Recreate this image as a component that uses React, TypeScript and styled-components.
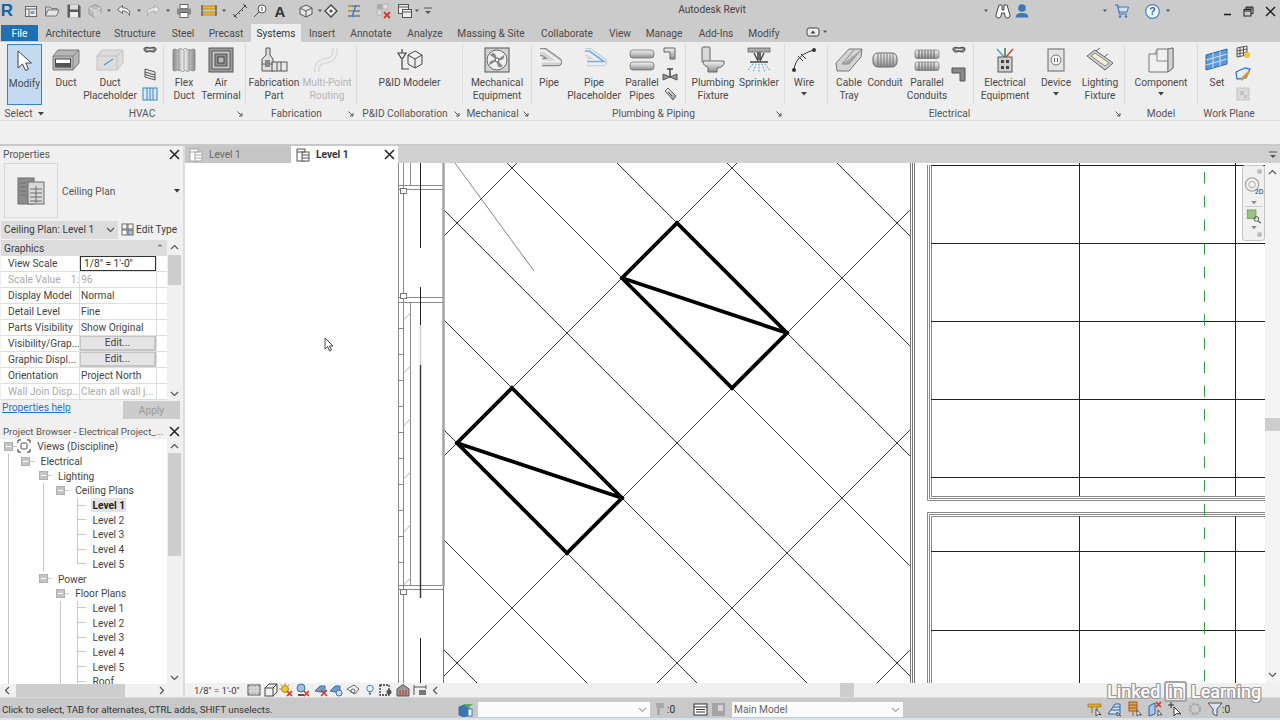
import React from "react";
import styled, { createGlobalStyle, css } from "styled-components";

const GlobalStyle = createGlobalStyle`
  html, body { margin: 0; padding: 0; background: #f0f0f0; }
  * { box-sizing: border-box; }
`;

type Item = [number, React.ReactNode];

// slots are 14px wide, the margin comes from the icon's centre in the strip
function IconStrip({ start, items }: { start: number; items: Item[] }) {
  let end = start;
  return (
    <>
      {items.map(([center, icon], i) => {
        const ml = center - 7 - end;
        end = center + 7;
        return (
          <Slot key={i} $ml={ml}>
            {icon}
          </Slot>
        );
      })}
    </>
  );
}

const Ico = ({ s = 14, h, children }: { s?: number; h?: number; children: React.ReactNode }) => (
  <svg width={s} height={h ?? s} viewBox={`0 0 ${s} ${h ?? s}`} fill="none">
    {children}
  </svg>
);

const Caret = ({ c = "#444" }: { c?: string }) => (
  <svg width="6" height="4" viewBox="0 0 6 4">
    <path d="M0 0H6L3 3.5Z" fill={c} />
  </svg>
);

const Dot = () => (
  <svg width="4" height="6" viewBox="0 0 4 6">
    <path d="M0 1.5H4L2 4Z" fill="#555" />
  </svg>
);

const Chevron = ({ dir, c = "#555" }: { dir: "up" | "down" | "left" | "right"; c?: string }) => {
  const d = {
    up: "M1 6L4.5 2.5L8 6",
    down: "M1 3L4.5 6.5L8 3",
    left: "M6 1L2.5 4.5L6 8",
    right: "M3 1L6.5 4.5L3 8",
  }[dir];
  return (
    <svg width="9" height="9" viewBox="0 0 9 9" fill="none">
      <path d={d} stroke={c} strokeWidth="1.2" />
    </svg>
  );
};

const Defs = () => (
  <svg width="0" height="0" style={{ position: "absolute" }}>
    <defs>
      <linearGradient id="metal" x1="0" y1="0" x2="0" y2="1">
        <stop offset="0" stopColor="#f2f2f2" />
        <stop offset="0.5" stopColor="#c4c4c4" />
        <stop offset="1" stopColor="#8d8d8d" />
      </linearGradient>
      <linearGradient id="metalH" x1="0" y1="0" x2="1" y2="0">
        <stop offset="0" stopColor="#8d8d8d" />
        <stop offset="0.5" stopColor="#efefef" />
        <stop offset="1" stopColor="#8d8d8d" />
      </linearGradient>
    </defs>
  </svg>
);

/* quick access toolbar */
const QDoc = () => (
  <Ico>
    <rect x="1.5" y="2.5" width="11" height="10" fill="#eee" stroke="#666" />
    <path d="M1.5 5H12.5M5 5V12.5" stroke="#666" />
    <rect x="6.5" y="7" width="4" height="3" fill="#7fa3c7" />
  </Ico>
);
const QOpen = () => (
  <Ico s={16}>
    <path d="M1.5 4H6L7.5 5.5H13V7M1.5 4V13H12.5L15 7H4L1.5 13" stroke="#777" fill="#e6e6e6" />
  </Ico>
);
const QSave = () => (
  <Ico s={16}>
    <path d="M1.5 1.5H12.5L14.5 3.5V14.5H1.5Z" fill="#5d5d5d" />
    <rect x="4" y="1.5" width="8" height="5" fill="#ddd" />
    <rect x="4" y="9" width="8" height="5.5" fill="#eee" />
  </Ico>
);
const QCube = () => (
  <Ico s={16}>
    <path d="M8 1.5L14 4.5V11L8 14.5L2 11V4.5Z" fill="#bdbdbd" stroke="#999" />
    <path d="M2 4.5L8 8L14 4.5M8 8V14.5" stroke="#e8e8e8" />
    <circle cx="11" cy="11" r="3" fill="#d0d0d0" />
  </Ico>
);
const QUndo = ({ c = "#666" }: { c?: string }) => (
  <Ico s={16}>
    <path d="M6.5 2.5L1.5 6.5L6.5 10.5V8C10 8 12 9 13.5 12.5C14.5 7 11 4.8 6.5 4.8Z" fill="#f4f4f4" stroke={c} />
  </Ico>
);
const QRedo = () => (
  <Ico s={16}>
    <path d="M9.5 2.5L14.5 6.5L9.5 10.5V8C6 8 4 9 2.5 12.5C1.5 7 5 4.8 9.5 4.8Z" fill="#ececec" stroke="#aaa" />
  </Ico>
);
const QPrint = () => (
  <Ico s={16}>
    <rect x="4" y="1.5" width="8" height="4" fill="#fff" stroke="#666" />
    <rect x="1" y="5.5" width="14" height="6" rx="1" fill="#8a8a8a" />
    <rect x="4" y="9.5" width="8" height="5" fill="#fff" stroke="#666" />
  </Ico>
);
const QMeasure = () => (
  <Ico s={16}>
    <rect x="1" y="3" width="14" height="3" fill="#e8b93c" stroke="#8c6d14" strokeWidth=".6" />
    <rect x="1" y="9" width="14" height="3" fill="#e8b93c" stroke="#8c6d14" strokeWidth=".6" />
    <path d="M1 2V13M15 2V13" stroke="#444" />
  </Ico>
);
const QDiag = () => (
  <Ico s={16}>
    <path d="M2 14L14 2M1 11L5 15M11 1L15 5" stroke="#444" />
    <path d="M6 9L8 11M9 6L11 8" stroke="#444" />
  </Ico>
);
const QTag = () => (
  <Ico s={16}>
    <circle cx="10" cy="6" r="4" stroke="#555" fill="#fff" />
    <path d="M7 9L2 14" stroke="#555" />
    <path d="M10 4V8" stroke="#555" />
  </Ico>
);
const QA = () => <BigA>A</BigA>;
const QView3d = () => (
  <Ico s={16}>
    <path d="M8 2L14 5V11L8 14L2 11V5Z" stroke="#555" fill="#e4e4e4" />
    <path d="M2 5L8 8L14 5M8 8V14" stroke="#555" />
  </Ico>
);
const QDiamond = () => (
  <Ico s={16}>
    <path d="M8 2L14 8L8 14L2 8Z" stroke="#444" fill="#eee" strokeWidth="1.3" />
    <circle cx="8" cy="8" r="1.6" fill="#555" />
  </Ico>
);
const QThin = () => (
  <Ico s={16}>
    <path d="M2 3H14M2 8H14M2 13H14" stroke="#777" strokeWidth="1.5" />
    <path d="M10 2L6 14" stroke="#3d7fc4" strokeWidth="1.5" />
    <path d="M2 3H6M2 8H6" stroke="#c9a227" strokeWidth="1.5" />
  </Ico>
);
const QClose = () => (
  <Ico s={16}>
    <rect x="1" y="1" width="5" height="5" fill="#aaa" />
    <rect x="7" y="1" width="5" height="5" fill="#ddd" stroke="#999" strokeWidth=".5" />
    <rect x="1" y="7" width="5" height="5" fill="#ddd" stroke="#999" strokeWidth=".5" />
    <path d="M8 9L14 15M14 9L8 15" stroke="#d8372a" strokeWidth="1.8" />
  </Ico>
);
const QWindows = () => (
  <Ico s={16}>
    <rect x="1.5" y="1.5" width="10" height="9" fill="#eee" stroke="#555" />
    <rect x="5.5" y="6.5" width="9" height="8" fill="#eee" stroke="#555" />
    <path d="M1.5 4H11.5M5.5 9H14.5" stroke="#555" />
  </Ico>
);
const QCustom = () => (
  <Ico s={10}>
    <path d="M1 2H9" stroke="#555" />
    <path d="M2 5H8L5 8Z" fill="#555" />
  </Ico>
);

const Binoculars = () => (
  <Ico s={16}>
    <path d="M4 2H7V7H9V2H12L15 12A2.5 2.5 0 0 1 10 13L9.5 10H6.5L6 13A2.5 2.5 0 0 1 1 12Z" fill="#fff" stroke="#444" />
  </Ico>
);
const User = () => (
  <Ico s={16}>
    <circle cx="8" cy="5" r="3.8" fill="#3d76b5" />
    <path d="M1.5 14.5C2 10.5 5 10 8 10C11 10 14 10.5 14.5 14.5Z" fill="#3d76b5" />
  </Ico>
);
const Cart = () => (
  <Ico s={16}>
    <path d="M1 2H3.5L5.5 11H13" stroke="#3d76b5" strokeWidth="1.2" />
    <path d="M4 4H14.5L13 9H5.2Z" fill="#cfe0f0" stroke="#3d76b5" />
    <circle cx="6" cy="13.5" r="1.2" fill="#3d76b5" />
    <circle cx="12" cy="13.5" r="1.2" fill="#3d76b5" />
  </Ico>
);
const Help = () => (
  <svg width="15" height="15" viewBox="0 0 15 15">
    <circle cx="7.5" cy="7.5" r="6.8" fill="#f4f8fc" stroke="#4b80b8" strokeWidth="1.2" />
    <text x="7.5" y="11.2" textAnchor="middle" fontFamily="Liberation Sans" fontWeight="700" fontSize="10.5" fill="#2f6aa8">
      ?
    </text>
  </svg>
);
const WinMin = () => (
  <Ico s={10}>
    <path d="M1 8.5H8" stroke="#222" strokeWidth="1.6" />
  </Ico>
);
const WinRestore = () => (
  <Ico s={11}>
    <rect x="1" y="3.5" width="7" height="6.5" fill="none" stroke="#222" />
    <path d="M3 3.5V1H10V7.5H8M1 5H8" stroke="#222" />
    <path d="M3 2H10" stroke="#222" />
  </Ico>
);
const WinClose = () => (
  <Ico s={11}>
    <path d="M1 1L10 10M10 1L1 10" stroke="#222" strokeWidth="1.5" />
  </Ico>
);

/* ribbon, large */
const ModifyIco = () => (
  <Ico s={24}>
    <path d="M5 2V19L9.5 15L12.5 21.5L15.5 20.2L12.7 14H18.5Z" fill="#fff" stroke="#444" />
  </Ico>
);
const DuctIco = ({ ghost }: { ghost?: boolean }) => (
  <svg width="28" height="22" viewBox="0 0 28 22">
    <path d="M1 7L6 1H27V14L21 21H1Z" fill={ghost ? "#dcdcdc" : "#b5b5b5"} stroke={ghost ? "#bbb" : "#666"} strokeWidth=".8" />
    <path d="M1 7H21V21M21 7L27 1" stroke={ghost ? "#bbb" : "#777"} strokeWidth=".8" fill="none" />
    {ghost ? (
      <path d="M8 16L17 10" stroke="#5a9ad6" strokeWidth="1.3" />
    ) : (
      <rect x="3.5" y="10" width="15" height="8" fill="#fff" stroke="#444" />
    )}
    {!ghost && <rect x="3.5" y="14" width="15" height="4" fill="#555" />}
  </svg>
);
const FlexDuct = () => (
  <svg width="24" height="26" viewBox="0 0 24 26">
    <path
      d="M1 3C3 0 5 5 7 2C9 0 10 4 12 2C14 0 15 4 17 2C19 5 21 0 23 3V23C21 26 19 21 17 24C15 26 14 22 12 24C10 26 9 22 7 24C5 21 3 26 1 23Z"
      fill="url(#metalH)"
      stroke="#777"
      strokeWidth=".7"
    />
    <path d="M7 3V23M12 3V23M17 3V23" stroke="#8a8a8a" strokeWidth=".8" />
  </svg>
);
const AirTerminal = () => (
  <svg width="26" height="26" viewBox="0 0 26 26">
    <rect x="1" y="1" width="24" height="24" fill="#9d9d9d" stroke="#555" />
    <rect x="4" y="4" width="18" height="18" fill="#c8c8c8" stroke="#555" />
    <rect x="7" y="7" width="12" height="12" fill="#8c8c8c" stroke="#555" />
    <rect x="10" y="10" width="6" height="6" fill="#bbb" stroke="#444" />
  </svg>
);
const FabPart = () => (
  <svg width="28" height="26" viewBox="0 0 28 26">
    <path d="M6 1H10V8L13 12V24H2V12L6 8Z" fill="#dedede" stroke="#555" />
    <rect x="12" y="15" width="15" height="9" fill="#e8e8e8" stroke="#555" />
    <path d="M17 15V24M21 15V24M2 17H13" stroke="#555" />
    <rect x="5" y="13" width="5" height="7" fill="#888" />
  </svg>
);
const MultiRoute = () => (
  <svg width="26" height="28" viewBox="0 0 26 28" fill="none">
    <path d="M3 26C2 17 7 16 11 15C17 14 21 13 21 2" stroke="#dcdcdc" strokeWidth="6" />
    <path d="M3 26C2 17 7 16 11 15C17 14 21 13 21 2" stroke="#efefef" strokeWidth="2.5" />
  </svg>
);
const PidIco = () => (
  <svg width="26" height="24" viewBox="0 0 26 24" fill="none">
    <path d="M5 1V5M1 5H9L6 10H4ZM5 10V21H12" stroke="#444" strokeWidth="1.2" />
    <path d="M18 3L25 7V16L18 20L11 16V7Z" fill="#eee" stroke="#444" />
    <path d="M11 7L18 11L25 7M18 11V20" stroke="#444" />
  </svg>
);
const MechEquip = () => (
  <svg width="26" height="26" viewBox="0 0 26 26" fill="none">
    <rect x="1" y="1" width="24" height="24" fill="#d2d2d2" stroke="#555" />
    <circle cx="13" cy="13" r="10" fill="#efefef" stroke="#666" />
    <path d="M13 13L6 8C9 4 12 6 13 13ZM13 13L20 8C21 12 18 14 13 13ZM13 13L19 19C15 22 13 20 13 13ZM13 13L6 18C4 15 7 13 13 13Z" fill="#888" />
    <circle cx="13" cy="13" r="2" fill="#fff" stroke="#555" />
  </svg>
);
const PipeIco = ({ ghost }: { ghost?: boolean }) => (
  <svg width="26" height="24" viewBox="0 0 26 24" fill="none">
    <path d="M4 4H8L22 14H6" stroke={ghost ? "#c8c8c8" : "#777"} strokeWidth="8.5" strokeLinejoin="round" />
    <path d="M4 4H8L22 14H6" stroke={ghost ? "#e8eef5" : "#d4d4d4"} strokeWidth="6.5" strokeLinejoin="round" />
    <path d="M4 3H8.4L23 13.5H6" stroke={ghost ? "#6db0e8" : "#f5f5f5"} strokeWidth="1.6" />
  </svg>
);
const ParallelPipes = () => (
  <svg width="26" height="24" viewBox="0 0 26 24">
    <rect x="1" y="2" width="24" height="8" rx="3" fill="url(#metal)" stroke="#666" strokeWidth=".7" />
    <rect x="1" y="14" width="24" height="8" rx="3" fill="url(#metal)" stroke="#666" strokeWidth=".7" />
  </svg>
);
const Toilet = () => (
  <svg width="26" height="28" viewBox="0 0 26 28">
    <rect x="2" y="1" width="8" height="15" rx="1" fill="#d8d8d8" stroke="#666" />
    <path d="M3 15H24C25 21 19 22 17 22V26H8V21C5 20 3 19 3 15Z" fill="url(#metal)" stroke="#666" />
  </svg>
);
const SprinklerIco = () => (
  <svg width="28" height="27" viewBox="0 0 28 27" fill="none">
    <rect x="3" y="1" width="22" height="4" fill="#aaa" stroke="#555" strokeWidth=".7" />
    <path d="M12 5H16V13H12Z" fill="#666" />
    <path d="M9 6L13 14M19 6L15 14M5 15H23" stroke="#444" strokeWidth="1.4" />
    <path d="M8 17L3 23M11 17L8 25M14 17V26M17 17L20 25M20 17L25 23" stroke="#6ba6d8" strokeWidth="1.2" strokeDasharray="1.5 1.5" />
  </svg>
);
const WireIco = () => (
  <svg width="26" height="26" viewBox="0 0 26 26" fill="none">
    <path d="M3 23C4 12 12 6 23 3" stroke="#333" />
    <circle cx="3" cy="23" r="2" fill="#333" />
    <circle cx="23" cy="3" r="2" fill="#333" />
    <path d="M7 9L12 14M10 7L15 12" stroke="#333" />
  </svg>
);
const CableTrayIco = () => (
  <svg width="28" height="26" viewBox="0 0 28 26">
    <path d="M1 16L14 2H27L26 10L14 24H2Z" fill="#d4d4d4" stroke="#777" />
    <path d="M7 17L19 3M7 17H14L26 3" stroke="#888" fill="#a8a8a8" />
  </svg>
);
const ConduitIco = () => (
  <svg width="26" height="16" viewBox="0 0 26 16">
    <rect x="1" y="1" width="24" height="14" rx="5" fill="url(#metal)" stroke="#666" />
    {[6, 9, 12, 15, 18, 21].map((x) => (
      <path key={x} d="M0 1.5V14.5" transform={`translate(${x} 0)`} stroke="#777" />
    ))}
  </svg>
);
const ParallelConduits = () => (
  <svg width="26" height="24" viewBox="0 0 26 24">
    {[2, 14].map((y) => (
      <g key={y}>
        <rect x="1" y={y} width="24" height="8.5" rx="2" fill="url(#metal)" stroke="#777" strokeWidth=".7" />
        {[5, 8, 11, 14, 17, 20].map((x) => (
          <path key={x} d={`M${x} ${y}v8.5`} stroke="#666" />
        ))}
      </g>
    ))}
  </svg>
);
const ElecEquip = () => (
  <svg width="26" height="26" viewBox="0 0 26 26" fill="none">
    <path d="M12 10L5 2" stroke="#4aa3d8" strokeWidth="1.5" />
    <path d="M13 10V1" stroke="#3b7a3b" strokeWidth="1.5" />
    <path d="M14 10L21 2" stroke="#d8443a" strokeWidth="1.5" />
    <rect x="6" y="10" width="14" height="15" fill="#cfcfcf" stroke="#555" />
    <path d="M9 13H12V16H9ZM14 13H17V16H14ZM9 19H12V22H9ZM14 19H17V22H14Z" fill="#444" />
  </svg>
);
const DeviceIco = () => (
  <svg width="18" height="24" viewBox="0 0 18 24" fill="none">
    <rect x="1" y="1" width="16" height="22" fill="#e4e4e4" stroke="#666" />
    <circle cx="9" cy="12" r="5" fill="#f2f2f2" stroke="#777" />
    <path d="M7.5 10V14M10.5 10V14" stroke="#666" />
  </svg>
);
const LightFixture = () => (
  <svg width="28" height="26" viewBox="0 0 28 26" fill="none">
    <path d="M1 9L9 3L27 16L19 23Z" fill="#cfcfcf" stroke="#666" />
    <path d="M5 9L9 6L23 16L19 19Z" fill="#f4f0d8" stroke="#888" />
    <path d="M10 4L14 1M18 10L22 7" stroke="#666" />
  </svg>
);
const ComponentIco = () => (
  <svg width="26" height="26" viewBox="0 0 26 26">
    <path d="M1 7H9V2H20L25 1V21L20 25H1Z" fill="#f0f0f0" stroke="#777" />
    <path d="M9 2L7 7M9 7V14H20V25M20 2V14M20 14L25 10" stroke="#888" fill="none" />
    <path d="M20 2L25 1V21L20 25Z" fill="#d2d2d2" stroke="#777" />
  </svg>
);
const SetIco = () => (
  <svg width="24" height="24" viewBox="0 0 24 24">
    <path d="M1 7L22 1V16L1 22Z" fill="#5c9ad6" stroke="#2d679f" />
    <path d="M8 5V20M15 3V18M1 12L22 6M1 17L22 11" stroke="#cfe2f5" />
  </svg>
);

/* ribbon, small */
const Elbow = () => (
  <Ico s={16}>
    <path d="M2 4C2 2 5 2 8 3C11 2 14 2 14 4C14 7 11 8 8 6C5 8 2 7 2 4Z" fill="#888" stroke="#444" />
    <path d="M5 4.5H11" stroke="#eee" />
  </Ico>
);
const Grille = () => (
  <Ico s={16}>
    <path d="M3 3L13 6V14L3 11Z" fill="#e8e8e8" stroke="#555" />
    <path d="M3 6L13 9M3 8.5L13 11.5" stroke="#555" />
  </Ico>
);
const Flex2 = () => (
  <Ico s={16}>
    <rect x="1" y="2" width="14" height="12" fill="#d8e8f5" stroke="#3b86c5" />
    <path d="M5 2V14M8 2V14M11 2V14" stroke="#3b86c5" />
  </Ico>
);
const PipeFit = () => (
  <Ico s={16}>
    <path d="M2 3H13V14H8V7H2Z" fill="url(#metal)" stroke="#666" />
  </Ico>
);
const Valve = () => (
  <Ico s={16}>
    <path d="M1 8V14L8 11L15 14V8L8 11Z" fill="#999" stroke="#555" />
    <path d="M8 11V3M5 3H11" stroke="#444" strokeWidth="1.5" />
  </Ico>
);
const Union = () => (
  <Ico s={16}>
    <path d="M3 5L6 2L14 10L11 14Z" fill="url(#metal)" stroke="#666" />
    <path d="M6 6L10 10" stroke="#444" />
  </Ico>
);
const ConduitElbow = () => (
  <Ico s={16}>
    <path d="M1 2H14V15H9V7H1Z" fill="#888" stroke="#555" />
  </Ico>
);
const WpGrid = () => (
  <Ico s={16}>
    <path d="M2 3L12 1V10L2 12Z" fill="#eee" stroke="#555" />
    <path d="M5 2.5V11.5M8.5 1.8V10.8M2 6L12 4M2 9L12 7" stroke="#555" />
    <circle cx="12" cy="10" r="3" fill="#f0c33c" />
  </Ico>
);
const WpEdit = () => (
  <Ico s={16}>
    <path d="M1 6L10 2L15 3L11 12L2 13Z" stroke="#2d7fc9" strokeWidth="1.3" />
    <path d="M6 14L14 6" stroke="#d99a2b" strokeWidth="2.5" />
  </Ico>
);
const WpGhost = () => (
  <Ico s={16}>
    <rect x="2" y="2" width="12" height="12" fill="#dadada" stroke="#c2c2c2" />
    <path d="M5 5H9V9H5ZM9 9H12V12H9Z" fill="#c2c2c2" />
  </Ico>
);
const CeilingSmall = ({ dim }: { dim?: boolean }) => (
  <Ico s={14}>
    <rect x="1" y="1" width="8" height="12" fill="#fff" stroke={dim ? "#aaa" : "#555"} />
    <rect x="6" y="4" width="7" height="9" fill="#fff" stroke={dim ? "#aaa" : "#555"} />
    <path d="M1 4H9M6 7H13M6 10H13" stroke={dim ? "#aaa" : "#555"} />
  </Ico>
);
const CeilingBig = () => (
  <svg width="28" height="28" viewBox="0 0 28 28">
    <rect x="1" y="1" width="16" height="26" fill="#8d8d8d" stroke="#6c6c6c" />
    <rect x="11" y="5" width="16" height="22" fill="#d8d8d8" stroke="#6c6c6c" />
    <path d="M3 6H9M3 10H9M3 14H9M3 18H9M13 12H25M13 16H25M13 20H25M13 24H25M19 9V26" stroke="#6c6c6c" />
  </svg>
);
const EditTypeIco = () => (
  <Ico s={13}>
    <rect x="1" y="1" width="5" height="5" fill="#fff" stroke="#666" />
    <rect x="7" y="1" width="5" height="5" fill="#fff" stroke="#666" />
    <rect x="1" y="7" width="5" height="5" fill="#fff" stroke="#666" />
    <rect x="7" y="7" width="5" height="5" fill="#9cc0e0" stroke="#666" />
  </Ico>
);
const ViewsIco = () => (
  <Ico s={14}>
    <path d="M1 4V1H4M10 1H13V4M13 10V13H10M4 13H1V10" stroke="#333" />
    <rect x="4" y="4" width="6" height="6" rx="1.5" stroke="#444" />
  </Ico>
);
const Launcher = () => (
  <svg width="6" height="6" viewBox="0 0 6 6" fill="none">
    <path d="M0.5 0.5L5 5M5 2V5H2" stroke="#555" />
  </svg>
);
const XIco = () => (
  <Ico s={11}>
    <path d="M1 1L10 10M10 1L1 10" stroke="#222" strokeWidth="1.5" />
  </Ico>
);

/* view control bar */
const VScaleBox = () => (
  <Ico>
    <rect x="1" y="2" width="12" height="10" fill="#bbb" stroke="#555" />
    <path d="M1 5H13M1 8H13M4 2V12M7 2V12M10 2V12" stroke="#eee" strokeWidth=".7" />
  </Ico>
);
const VCube = () => (
  <Ico>
    <rect x="1" y="5" width="8" height="8" stroke="#444" />
    <path d="M1 5L5 1H13V9L9 13M9 5L13 1" stroke="#444" />
  </Ico>
);
const VSun = () => (
  <Ico>
    <circle cx="6" cy="6" r="3.5" fill="#f0c33c" stroke="#b78b12" />
    <path d="M6 0V2M0 6H2M1.5 1.5L3 3M10.5 1.5L9 3" stroke="#b78b12" />
    <path d="M8 8L13 13M13 8L8 13" stroke="#d8372a" strokeWidth="1.7" />
  </Ico>
);
const VShadow = () => (
  <Ico>
    <circle cx="5" cy="5" r="4" fill="#9cc0e0" stroke="#3b6fa5" />
    <path d="M2 12H8" stroke="#555" strokeWidth="2" />
    <path d="M8 8L13 13M13 8L8 13" stroke="#d8372a" strokeWidth="1.7" />
  </Ico>
);
const VCrop = ({ x }: { x?: boolean }) => (
  <Ico>
    <path d="M1 8L6 3H11V9H6Z" fill="#6f9cc9" stroke="#3b6fa5" />
    {x ? <path d="M7 7L13 13M13 7L7 13" stroke="#d8372a" strokeWidth="1.7" /> : <circle cx="10" cy="10" r="3" fill="#cfe0f0" stroke="#3b6fa5" />}
  </Ico>
);
const VGlasses = () => (
  <Ico>
    <path d="M1 6L8 2L13 6L9 11Z" stroke="#666" fill="#f4f4f4" />
    <circle cx="7" cy="8" r="2" stroke="#666" />
  </Ico>
);
const VBulb = () => (
  <Ico>
    <circle cx="7" cy="5.5" r="3.2" stroke="#3b7fb8" fill="#e8f2fa" />
    <path d="M5.5 9.5H8.5L7.5 12H6.5Z" fill="#3b7fb8" />
  </Ico>
);
const VReveal = () => (
  <Ico>
    <rect x="1" y="2" width="9" height="10" stroke="#333" strokeDasharray="2 1" strokeWidth="1.3" />
    <circle cx="10" cy="9" r="2.5" fill="#555" />
  </Ico>
);
const VHouse = () => (
  <Ico>
    <path d="M1 6L7 1.5L13 6V13H1Z" fill="#9a9a9a" stroke="#555" />
    <path d="M4 7V13M7 7V13M10 7V13" stroke="#c0392b" />
  </Ico>
);
const VLevel = () => (
  <Ico>
    <path d="M1 2V12M1 4H13M13 2V6" stroke="#555" />
    <rect x="6" y="7" width="7" height="5" fill="#777" />
  </Ico>
);

/* status bar */
const SWorkset = () => (
  <Ico s={16}>
    <path d="M1 6L6 4L11 6V14L6 16L1 14Z" fill="#3d76b5" stroke="#1f4f85" strokeWidth=".6" />
    <path d="M5 3H15L10 7Z" fill="#5cae5c" />
    <rect x="10" y="8" width="4" height="7" fill="#fff" stroke="#3d76b5" />
  </Ico>
);
const SGhost = () => (
  <Ico s={16}>
    <path d="M4 2H12V7H8V14H5V6H4Z" fill="#a9a9a9" />
  </Ico>
);
const SPanel = () => (
  <Ico s={15}>
    <rect x="1" y="2" width="13" height="11" fill="#fff" stroke="#333" />
    <path d="M1 5H14M3 7.5H12M3 10H12" stroke="#333" />
  </Ico>
);
const SGhost2 = () => (
  <Ico s={15}>
    <rect x="1" y="1" width="13" height="13" fill="#a4a4a4" />
    <path d="M7 3H12V9H7Z" fill="#d4d4d4" />
  </Ico>
);
const SYellow = () => (
  <Ico s={16}>
    <path d="M1 3H14V6H1Z" fill="#e6a72c" stroke="#8c6d14" strokeWidth=".6" />
    <path d="M5 6V12M10 6V10" stroke="#8c6d14" />
    <path d="M9 8V15L11 13L14 14Z" fill="#fff" stroke="#333" strokeWidth=".8" />
  </Ico>
);
const SBlueFrame = () => (
  <Ico s={16}>
    <path d="M1 13L8 3H13V13Z" fill="#cfe0f0" stroke="#2d679f" />
    <path d="M4 9H13M6 6H13" stroke="#2d679f" />
    <path d="M10 11V15L12 14L14 15Z" fill="#fff" stroke="#333" strokeWidth=".8" />
  </Ico>
);
const SOrange = () => (
  <Ico s={16}>
    <rect x="2" y="1" width="8" height="9" fill="#e8a05c" stroke="#a35a1c" />
    <path d="M2 4H10M2 7H10M6 10V15" stroke="#a35a1c" />
    <path d="M10 9V15L12 13.5L14.5 14Z" fill="#fff" stroke="#333" strokeWidth=".8" />
  </Ico>
);
const SBlueX = () => (
  <Ico s={16}>
    <path d="M2 5L8 2V13L2 15Z" fill="#a9c8e6" stroke="#2d679f" />
    <path d="M9 1L14 6M14 1L9 6" stroke="#d8372a" strokeWidth="1.7" />
    <path d="M11 9V15L12.5 13.5L15 14Z" fill="#fff" stroke="#333" strokeWidth=".8" />
  </Ico>
);
const SMove = () => (
  <Ico s={16}>
    <path d="M4 1V7M1 4H7" stroke="#333" />
    <path d="M7 6V15L9.5 12.5L14 13Z" fill="#fff" stroke="#333" />
  </Ico>
);
const SGear = () => (
  <Ico s={16}>
    <circle cx="8" cy="8" r="5" stroke="#a9a9a9" strokeWidth="2.4" strokeDasharray="3 1" />
  </Ico>
);
const SFilter = () => (
  <Ico s={16}>
    <path d="M1 2H15L10 8V15L6 13V8Z" fill="#d8e4ee" stroke="#555" />
  </Ico>
);

const TABS: [string, number][] = [
  ["Architecture", 70],
  ["Structure", 54],
  ["Steel", 42],
  ["Precast", 44],
];
const TABS_AFTER: [string, number][] = [
  ["Insert", 42],
  ["Annotate", 56],
  ["Analyze", 52],
  ["Massing & Site", 80],
  ["Collaborate", 72],
  ["View", 34],
  ["Manage", 54],
  ["Add-Ins", 50],
  ["Modify", 46],
];

function Tool({
  w,
  icon,
  label,
  dim,
  active,
  caret,
}: {
  w: number;
  icon: React.ReactNode;
  label: string;
  dim?: boolean;
  active?: boolean;
  caret?: boolean;
}) {
  return (
    <ToolBox $w={w} $active={active}>
      <IconSlot>{icon}</IconSlot>
      <ToolLabel $dim={dim}>{label}</ToolLabel>
      {caret && (
        <CaretRow>
          <Caret />
        </CaretRow>
      )}
    </ToolBox>
  );
}

const PROPS: { name: string; value: string; dim?: boolean; edit?: boolean; input?: boolean }[] = [
  { name: "View Scale", value: "1/8\" = 1'-0\"", input: true },
  { name: "Scale Value    1:", value: "96", dim: true },
  { name: "Display Model", value: "Normal" },
  { name: "Detail Level", value: "Fine" },
  { name: "Parts Visibility", value: "Show Original" },
  { name: "Visibility/Grap...", value: "Edit...", edit: true },
  { name: "Graphic Displ...", value: "Edit...", edit: true },
  { name: "Orientation", value: "Project North" },
  { name: "Wall Join Disp...", value: "Clean all wall j...", dim: true },
];

// each char of cells is one tree column: | line, + expander, T tee, L elbow
const TREE: { cells: string; label: string; views?: boolean; sel?: boolean }[] = [
  { cells: "+", label: "Views (Discipline)", views: true },
  { cells: "|+", label: "Electrical" },
  { cells: "| +", label: "Lighting" },
  { cells: "| |+", label: "Ceiling Plans" },
  { cells: "| | T", label: "Level 1", sel: true },
  { cells: "| | T", label: "Level 2" },
  { cells: "| | T", label: "Level 3" },
  { cells: "| | T", label: "Level 4" },
  { cells: "| | L", label: "Level 5" },
  { cells: "| +", label: "Power" },
  { cells: "|  +", label: "Floor Plans" },
  { cells: "|  |T", label: "Level 1" },
  { cells: "|  |T", label: "Level 2" },
  { cells: "|  |T", label: "Level 3" },
  { cells: "|  |T", label: "Level 4" },
  { cells: "|  |T", label: "Level 5" },
  { cells: "|  |T", label: "Roof" },
];

function Scrollbar({ top, size, w = 13 }: { top: number; size: number; w?: number }) {
  return (
    <ScrollTrack $w={w}>
      <ScrollArrow>
        <Chevron dir="up" />
      </ScrollArrow>
      <ScrollThumb $top={top} $size={size} />
      <ScrollFill />
      <ScrollArrow>
        <Chevron dir="down" />
      </ScrollArrow>
    </ScrollTrack>
  );
}

function Drawing() {
  const sums = [680, 900, 1120, 1340, 1560, 1780];
  const diffs = [];
  for (let d = -646; d <= 800; d += 110) diffs.push(d);
  const hLines = [243, 321, 399, 477, 551, 630];
  const hatch = [320, 373, 426, 479, 532, 585];
  const ticks = [];
  for (let y = 302; y < 586; y += 26) ticks.push(y);
  return (
    <svg width="1080" height="520" viewBox="185 163 1080 520" fill="none">
      <defs>
        <clipPath id="gridclip">
          <rect x="444" y="163" width="467" height="520" />
        </clipPath>
      </defs>
      <g clipPath="url(#gridclip)" stroke="#3a3a3a" strokeWidth="1">
        {sums.map((s) => (
          <line key={s} x1={s - 163} y1="163" x2={s - 683} y2="683" />
        ))}
        {diffs.map((d) => (
          <line key={d} x1={d + 163} y1="163" x2={d + 683} y2="683" />
        ))}
      </g>
      <path d="M455 163L534 271" stroke="#666" strokeWidth=".8" />
      <g stroke="#000" strokeWidth="3.8" strokeLinejoin="miter">
        <path d="M677 223L787 333L732 388L622 278ZM622 278L787 333" />
        <path d="M512 388L622 498L567 553L457 443ZM457 443L622 498" />
      </g>

      {/* wall on the left */}
      <g stroke="#8a8a8a" strokeWidth="1">
        <path d="M398.5 163V683M403.5 163V683M410.5 163V185M410.5 302V585M398.5 185.5H443M398.5 189.5H443M398.5 297.5H443M398.5 302.5H443M398.5 585.5H443M398.5 589.5H443" />
        {hatch.map((y) => (
          <line key={y} x1="403.5" y1={y} x2="410.5" y2={y - 7} stroke="#aaa" />
        ))}
        {ticks.map((y) => (
          <line key={y} x1="398.5" y1={y + 0.5} x2="403.5" y2={y + 0.5} />
        ))}
        <path d="M443.5 163V586" stroke="#a0a0a0" strokeWidth="2.4" />
        <path d="M443.5 586V683" stroke="#777" />
      </g>
      <rect x="400.5" y="188.5" width="6" height="5" fill="#fff" stroke="#777" />
      <rect x="400.5" y="293.5" width="6" height="5" fill="#fff" stroke="#777" />
      <rect x="400.5" y="589.5" width="6" height="5" fill="#fff" stroke="#777" />
      <path d="M420.5 163V248M420.5 287V325M420.5 638V683" stroke="#222" />
      <path d="M420.5 325V365" stroke="#ccc" strokeWidth="1.6" />
      <path d="M420.5 365V598" stroke="#333" strokeWidth="1.4" />

      {/* building on the right */}
      <path d="M910.5 163V683M912.5 163V683M914.5 163V683" stroke="#777" strokeWidth="1" />
      <path d="M927.5 165V500.5H1265M929.5 165V498.5H1265M931.5 165V496.5H1265" stroke="#888" strokeWidth="1" />
      <path d="M1265 512.5H927.5V683M1265 514.5H929.5V683M1265 516.5H931.5V683" stroke="#888" strokeWidth="1" />
      <path d="M931 165.5H1265" stroke="#222" />
      <g stroke="#222" strokeWidth="1">
        {hLines.map((y) => (
          <line key={y} x1="931" y1={y + 0.5} x2="1265" y2={y + 0.5} />
        ))}
        <path d="M1079.5 163V496M1079.5 516V683M1235.5 163V496M1235.5 516V683" />
      </g>
      <path d="M1204.5 163V683" stroke="#2e9e4a" strokeDasharray="11.5 12.2" strokeDashoffset="-9" />
    </svg>
  );
}

export default function App() {
  return (
    <Root>
      <GlobalStyle />
      <Defs />
      <TitleBar>
        <QatArea>
          <IconStrip
            start={0}
            items={[
              [7, <RLogo>R</RLogo>],
              [31, <QDoc />],
              [52, <QOpen />],
              [74, <QSave />],
              [95, <QCube />],
              [109, <Dot />],
              [124, <QUndo />],
              [139, <Dot />],
              [153, <QRedo />],
              [168, <Dot />],
              [184, <QPrint />],
              [209, <QMeasure />],
              [224, <Dot />],
              [240, <QDiag />],
              [260, <QTag />],
              [280, <QA />],
              [306, <QView3d />],
              [320, <Dot />],
              [331, <QDiamond />],
              [354, <QThin />],
              [384, <QClose />],
              [405, <QWindows />],
              [417, <Dot />],
              [428, <QCustom />],
            ]}
          />
        </QatArea>
        <TitleText>Autodesk Revit</TitleText>
        <IconStrip
          start={984}
          items={[
            [986, <Dot />],
            [1003, <Binoculars />],
            [1022, <User />],
            [1105, <Dot />],
            [1122, <Cart />],
            [1152, <Help />],
            [1168, <Dot />],
            [1228, <WinMin />],
            [1248, <WinRestore />],
            [1270, <WinClose />],
          ]}
        />
      </TitleBar>

      <TabRow>
        <FileTab>File</FileTab>
        {TABS.map(([t, w]) => (
          <RibbonTab key={t} $w={w}>
            {t}
          </RibbonTab>
        ))}
        <ActiveRibbonTab>Systems</ActiveRibbonTab>
        {TABS_AFTER.map(([t, w]) => (
          <RibbonTab key={t} $w={w}>
            {t}
          </RibbonTab>
        ))}
        <IconStrip
          start={788}
          items={[
            [814, <RibbonToggle />],
            [826, <Dot />],
          ]}
        />
      </TabRow>

      <Ribbon>
        <Panel $w={48}>
          <ToolRow>
            <Gap $w={7} />
            <Tool w={35} icon={<ModifyIco />} label="Modify" active />
          </ToolRow>
          <PanelLabel>
            Select <Caret />
          </PanelLabel>
        </Panel>
        <Panel $w={198}>
          <ToolRow>
            <Tool w={36} icon={<DuctIco />} label="Duct" />
            <Tool w={52} icon={<DuctIco ghost />} label={"Duct\nPlaceholder"} />
            <SmallCol $w={27}>
              <Elbow />
              <Grille />
              <Flex2 />
            </SmallCol>
            <Sep />
            <Tool w={40} icon={<FlexDuct />} label={"Flex\nDuct"} />
            <Tool w={34} icon={<AirTerminal />} label={"Air\nTerminal"} />
            <Gap $w={7} />
            <Sep />
          </ToolRow>
          <PanelLabel $launcher>
            <span>HVAC</span>
            <Launcher />
          </PanelLabel>
        </Panel>
        <Panel $w={111}>
          <ToolRow>
            <Gap $w={4} />
            <Tool w={48} icon={<FabPart />} label={"Fabrication\nPart"} />
            <Tool w={58} icon={<MultiRoute />} label={"Multi-Point\nRouting"} dim />
            <Sep />
          </ToolRow>
          <PanelLabel $launcher>
            <span>Fabrication</span>
            <Launcher />
          </PanelLabel>
        </Panel>
        <Panel $w={106}>
          <ToolRow>
            <Tool w={105} icon={<PidIco />} label="P&ID Modeler" />
            <Sep />
          </ToolRow>
          <PanelLabel $launcher>
            <span>P&ID Collaboration</span>
            <Launcher />
          </PanelLabel>
        </Panel>
        <Panel $w={69}>
          <ToolRow>
            <Tool w={68} icon={<MechEquip />} label={"Mechanical\nEquipment"} />
            <Sep />
          </ToolRow>
          <PanelLabel $launcher>
            <span>Mechanical</span>
            <Launcher />
          </PanelLabel>
        </Panel>
        <Panel $w={253}>
          <ToolRow>
            <Tool w={34} icon={<PipeIco />} label="Pipe" />
            <Tool w={56} icon={<PipeIco ghost />} label={"Pipe\nPlaceholder"} />
            <Tool w={40} icon={<ParallelPipes />} label={"Parallel\nPipes"} />
            <SmallCol $w={16}>
              <PipeFit />
              <Valve />
              <Union />
            </SmallCol>
            <Gap $w={7} />
            <Sep />
            <Tool w={54} icon={<Toilet />} label={"Plumbing\nFixture"} />
            <Tool w={38} icon={<SprinklerIco />} label="Sprinkler" />
            <Gap $w={6} />
            <Sep />
          </ToolRow>
          <PanelLabel $launcher>
            <span>Plumbing & Piping</span>
            <Launcher />
          </PanelLabel>
        </Panel>
        <Panel $w={339}>
          <ToolRow>
            <Tool w={38} icon={<WireIco />} label="Wire" caret />
            <Gap $w={4} />
            <Sep />
            <Tool w={42} icon={<CableTrayIco />} label={"Cable\nTray"} />
            <Tool w={30} icon={<ConduitIco />} label="Conduit" />
            <Tool w={54} icon={<ParallelConduits />} label={"Parallel\nConduits"} />
            <SmallCol $w={10}>
              <Elbow />
              <ConduitElbow />
            </SmallCol>
            <Gap $w={9} />
            <Sep />
            <Tool w={62} icon={<ElecEquip />} label={"Electrical\nEquipment"} />
            <Tool w={40} icon={<DeviceIco />} label="Device" caret />
            <Tool w={48} icon={<LightFixture />} label={"Lighting\nFixture"} />
          </ToolRow>
          <PanelLabel $launcher>
            <span>Electrical</span>
            <Launcher />
          </PanelLabel>
        </Panel>
        <Panel $w={74}>
          <ToolRow>
            <Sep />
            <Tool w={72} icon={<ComponentIco />} label="Component" caret />
            <Sep />
          </ToolRow>
          <PanelLabel>Model</PanelLabel>
        </Panel>
        <Panel $w={62}>
          <ToolRow>
            <Tool w={38} icon={<SetIco />} label="Set" />
            <SmallCol $w={14}>
              <WpGrid />
              <WpEdit />
              <WpGhost />
            </SmallCol>
          </ToolRow>
          <PanelLabel>Work Plane</PanelLabel>
        </Panel>
      </Ribbon>

      <OptionsBar />

      <Body>
        <LeftColumn>
          <Properties>
            <PaneHeader $h={16}>
              <span>Properties</span>
              <XIco />
            </PaneHeader>
            <TypeRow>
              <TypeThumb>
                <CeilingBig />
              </TypeThumb>
              <TypeName>Ceiling Plan</TypeName>
              <Caret c="#333" />
            </TypeRow>
            <SelectorRow>
              <Selector>
                <span>Ceiling Plan: Level 1</span>
                <Chevron dir="down" />
              </Selector>
              <EditType>
                <EditTypeIco />
                Edit Type
              </EditType>
            </SelectorRow>
            <PropsArea>
              <PropsTable>
                <GroupHeader>
                  <span>Graphics</span>
                  <Collapse>⌃</Collapse>
                </GroupHeader>
                {PROPS.map((p) => (
                  <PropRow key={p.name}>
                    <PropName $dim={p.dim}>{p.name}</PropName>
                    {p.edit ? (
                      <PropValue>
                        <EditButton>{p.value}</EditButton>
                      </PropValue>
                    ) : p.input ? (
                      <PropValue>
                        <ValueInput>{p.value}</ValueInput>
                      </PropValue>
                    ) : (
                      <PropValue $dim={p.dim}>{p.value}</PropValue>
                    )}
                    <PropBlank />
                  </PropRow>
                ))}
              </PropsTable>
              <Scrollbar top={1} size={30} />
            </PropsArea>
            <PropsFooter>
              <HelpLink>Properties help</HelpLink>
              <ApplyButton>Apply</ApplyButton>
            </PropsFooter>
          </Properties>

          <Browser>
            <PaneHeader $h={15}>
              <BrowserTitle>Project Browser - Electrical Project_...</BrowserTitle>
              <XIco />
            </PaneHeader>
            <BrowserMain>
              <Tree>
                {TREE.map((r, i) => (
                  <TreeRow key={i}>
                    {r.cells.split("").map((c, j) => (
                      <TreeCell key={j} $kind={c}>
                        {c === "+" && <Expander />}
                      </TreeCell>
                    ))}
                    {r.views && (
                      <ViewsSlot>
                        <ViewsIco />
                      </ViewsSlot>
                    )}
                    <TreeLabel $sel={r.sel}>{r.label}</TreeLabel>
                  </TreeRow>
                ))}
              </Tree>
              <Scrollbar top={0} size={103} />
            </BrowserMain>
            <HScroll>
              <Chevron dir="left" />
              <HThumb />
              <Chevron dir="right" />
            </HScroll>
          </Browser>
        </LeftColumn>

        <ViewColumn>
          <ViewTabs>
            <ViewTab>
              <CeilingSmall dim />
              <span>Level 1</span>
            </ViewTab>
            <ViewTab $active>
              <CeilingSmall />
              <b>Level 1</b>
              <TabClose>
                <XIco />
              </TabClose>
            </ViewTab>
            <TabMenu>
              <QCustom />
            </TabMenu>
          </ViewTabs>
          <CanvasRow>
            <CanvasArea>
              <Drawing />
              <Cursor>
                <svg width="10" height="15" viewBox="0 0 10 15">
                  <path d="M1 1V12L3.5 9.5L5.5 14L7.5 13L5.5 9H9Z" fill="#fff" stroke="#333" strokeWidth=".9" />
                </svg>
              </Cursor>
              <NavBar>
                <NavKnob />
                <svg width="20" height="24" viewBox="0 0 20 24" fill="none">
                  <circle cx="8" cy="9" r="7" stroke="#aaa" strokeWidth="1.4" />
                  <circle cx="8" cy="9" r="3.5" stroke="#aaa" />
                  <text x="11" y="19" fontFamily="Liberation Sans" fontSize="7" fontWeight="700" fill="#3d76b5">
                    2D
                  </text>
                </svg>
                <Caret c="#888" />
                <NavSep />
                <svg width="16" height="16" viewBox="0 0 16 16" fill="none">
                  <rect x="1" y="1" width="9" height="9" fill="#9cc084" stroke="#7d9f68" />
                  <circle cx="10.5" cy="10.5" r="2.5" stroke="#555" />
                  <path d="M12.5 12.5L15 15" stroke="#555" strokeWidth="1.3" />
                </svg>
                <Caret c="#888" />
                <NavKnob />
              </NavBar>
            </CanvasArea>
            <MainScroll>
              <ScrollArrow>
                <Chevron dir="up" />
              </ScrollArrow>
              <MainThumb />
              <ScrollFill />
              <ScrollArrow>
                <Chevron dir="down" />
              </ScrollArrow>
            </MainScroll>
          </CanvasRow>
          <ViewBar>
            <ScaleText>1/8" = 1'-0"</ScaleText>
            <IconStrip
              start={55}
              items={[
                [69, <VScaleBox />],
                [86, <VCube />],
                [101, <VSun />],
                [118, <VShadow />],
                [136, <VCrop x />],
                [151, <VCrop />],
                [168, <VGlasses />],
                [185, <VBulb />],
                [201, <VReveal />],
                [218, <VHouse />],
                [235, <VLevel />],
                [250, <Chevron dir="left" />],
              ]}
            />
            <ViewTrack>
              <ViewThumb />
            </ViewTrack>
          </ViewBar>
        </ViewColumn>
      </Body>

      <StatusBar>
        <StatusText>Click to select, TAB for alternates, CTRL adds, SHIFT unselects.</StatusText>
        <IconStrip start={340} items={[[466, <SWorkset />]]} />
        <Combo $ml={5} $w={172}>
          <Chevron dir="down" c="#aaa" />
        </Combo>
        <IconStrip start={650} items={[[660, <SGhost />]]} />
        <StatusCount>:0</StatusCount>
        <IconStrip
          start={678}
          items={[
            [700, <SPanel />],
            [718, <SGhost2 />],
          ]}
        />
        <Combo $ml={7} $w={171}>
          <ComboText>Main Model</ComboText>
          <Chevron dir="down" c="#aaa" />
        </Combo>
        <IconStrip
          start={903}
          items={[
            [1095, <SYellow />],
            [1115, <SBlueFrame />],
            [1135, <SOrange />],
            [1155, <SBlueX />],
            [1175, <SMove />],
            [1195, <SGear />],
            [1215, <SFilter />],
          ]}
        />
        <StatusCount>:0</StatusCount>
      </StatusBar>

      <Watermark>
        <span>Linked</span>
        <InBox>in</InBox>
        <span>Learning</span>
      </Watermark>
    </Root>
  );
}

function RibbonToggle() {
  return (
    <Ico s={14}>
      <rect x="1" y="3" width="12" height="8" rx="2" fill="#eee" stroke="#444" />
      <path d="M4.5 8.5H9.5L7 5.5Z" fill="#444" />
    </Ico>
  );
}

const FONT = `Roboto, "Open Sans", sans-serif`;

const Root = styled.div`
  position: relative;
  width: 1280px;
  height: 720px;
  overflow: hidden;
  display: flex;
  flex-direction: column;
  background: #f0f0f0;
  font-family: ${FONT};
  font-size: 10.2px;
  color: #3c3c3c;
`;

const Slot = styled.div<{ $ml: number }>`
  flex: 0 0 14px;
  width: 14px;
  margin-left: ${(p) => p.$ml}px;
  display: flex;
  align-items: center;
  justify-content: center;
  overflow: visible;
  svg {
    flex: none;
  }
`;

const TitleBar = styled.div`
  height: 22px;
  display: flex;
  align-items: center;
  background: #cbcbcb;
`;

const QatArea = styled.div`
  width: 440px;
  display: flex;
  align-items: center;
`;

const RLogo = styled.span`
  font: 700 17px "Liberation Sans", sans-serif;
  color: #1f5fa6;
`;

const BigA = styled.span`
  font: 700 15px "Liberation Sans", sans-serif;
  color: #333;
`;

const TitleText = styled.div`
  width: 544px;
  text-align: center;
  margin-top: -4px;
  color: #444;
`;

const TabRow = styled.div`
  height: 20px;
  display: flex;
  align-items: stretch;
  background: #cbcbcb;
  padding-left: 1px;
`;

const FileTab = styled.div`
  width: 37px;
  margin: 3px 0 1px;
  background: #1f6fb4;
  color: #fff;
  display: flex;
  align-items: center;
  justify-content: center;
`;

const RibbonTab = styled.div<{ $w: number }>`
  width: ${(p) => p.$w}px;
  margin-top: 2px;
  display: flex;
  align-items: center;
  justify-content: center;
  white-space: nowrap;
  color: #4a4a4a;
`;

const ActiveRibbonTab = styled(RibbonTab).attrs({ $w: 50 })`
  margin-left: 3px;
  background: #eeeeee;
  color: #333;
`;

const Ribbon = styled.div`
  height: 79px;
  display: flex;
  background: #eeeeee;
  border-bottom: 1px solid #e0e0e0;
`;

const Panel = styled.div<{ $w: number }>`
  width: ${(p) => p.$w}px;
  flex: none;
  display: flex;
  flex-direction: column;
`;

const ToolRow = styled.div`
  height: 65px;
  padding-top: 2px;
  display: flex;
`;

const Gap = styled.div<{ $w: number }>`
  flex: 0 0 ${(p) => p.$w}px;
`;

const Sep = styled.div`
  flex: 0 0 1px;
  height: 60px;
  background: #dcdcdc;
`;

const ToolBox = styled.div<{ $w: number; $active?: boolean }>`
  flex: 0 0 ${(p) => p.$w}px;
  width: ${(p) => p.$w}px;
  height: 61px;
  display: flex;
  flex-direction: column;
  align-items: center;
  ${(p) =>
    p.$active &&
    css`
      background: #c3daf0;
      border: 1px solid #3f7fbf;
    `}
`;

const IconSlot = styled.div`
  height: 32px;
  flex: none;
  display: flex;
  align-items: center;
  justify-content: center;
  svg {
    flex: none;
  }
`;

const ToolLabel = styled.div<{ $dim?: boolean }>`
  white-space: pre;
  text-align: center;
  line-height: 13px;
  color: ${(p) => (p.$dim ? "#b4b4b4" : "#4a4a4a")};
`;

const CaretRow = styled.div`
  height: 9px;
  display: flex;
  align-items: center;
`;

const SmallCol = styled.div<{ $w: number }>`
  flex: 0 0 ${(p) => p.$w}px;
  width: ${(p) => p.$w}px;
  height: 60px;
  padding-top: 1px;
  display: flex;
  flex-direction: column;
  align-items: center;
  gap: 4.5px;
  svg {
    flex: none;
  }
`;

const PanelLabel = styled.div<{ $launcher?: boolean }>`
  height: 13px;
  display: flex;
  align-items: center;
  justify-content: center;
  gap: 5px;
  color: #555;
  white-space: nowrap;
  ${(p) =>
    p.$launcher &&
    css`
      gap: 1px;
      padding-right: 3px;
      span {
        flex: 1;
        text-align: center;
      }
    `}
`;

const OptionsBar = styled.div`
  height: 23px;
  background: #f0f0f0;
`;

const Body = styled.div`
  flex: 1;
  min-height: 0;
  display: flex;
  border-top: 2px solid #c9c9c9;
`;

const LeftColumn = styled.div`
  width: 185px;
  flex: none;
  display: flex;
  flex-direction: column;
  border-right: 2px solid #dcdcdc;
`;

const Properties = styled.div`
  height: 278px;
  flex: none;
  display: flex;
  flex-direction: column;
`;

const PaneHeader = styled.div<{ $h: number }>`
  height: ${(p) => p.$h}px;
  flex: none;
  padding: 0 3px;
  display: flex;
  align-items: center;
  justify-content: space-between;
  color: #555;
  white-space: nowrap;
  svg {
    flex: none;
  }
`;

const BrowserTitle = styled.span`
  font-size: 9.7px;
`;

const TypeRow = styled.div`
  height: 56px;
  flex: none;
  padding: 1px 3px 0 4px;
  display: flex;
  align-items: center;
`;

const TypeThumb = styled.div`
  width: 54px;
  height: 55px;
  display: flex;
  align-items: center;
  justify-content: center;
  border: 1px solid #d8d8d8;
`;

const TypeName = styled.div`
  flex: 1;
  padding: 1px 0 0 4px;
  color: #555;
`;

const SelectorRow = styled.div`
  height: 19px;
  flex: none;
  display: flex;
  align-items: center;
  margin: 2px 0 1px;
`;

const Selector = styled.div`
  width: 117px;
  height: 18px;
  margin-left: 1px;
  padding: 0 3px;
  background: #dcdcdc;
  display: flex;
  align-items: center;
  justify-content: space-between;
  white-space: nowrap;
`;

const EditType = styled.div`
  margin-left: 3px;
  display: flex;
  align-items: center;
  gap: 2px;
  white-space: nowrap;
`;

const PropsArea = styled.div`
  height: 160px;
  flex: none;
  display: flex;
  overflow: hidden;
`;

const PropsTable = styled.div`
  width: 166px;
  margin-left: 1px;
  flex: none;
`;

const GroupHeader = styled.div`
  height: 16px;
  padding: 0 3px;
  background: #dcdcdc;
  display: flex;
  align-items: center;
  justify-content: space-between;
`;

const Collapse = styled.span`
  font-size: 9px;
  line-height: 9px;
`;

const PropRow = styled.div`
  height: 16px;
  display: grid;
  grid-template-columns: 78px 78px 10px;
  background: #fff;
  border-bottom: 1px solid #dedede;
`;

const PropName = styled.div<{ $dim?: boolean }>`
  padding-left: 7px;
  line-height: 15px;
  white-space: pre;
  color: ${(p) => (p.$dim ? "#aaa" : "#444")};
`;

const PropValue = styled.div<{ $dim?: boolean }>`
  padding-left: 1px;
  line-height: 15px;
  white-space: nowrap;
  border-left: 1px solid #dedede;
  border-right: 1px solid #dedede;
  color: ${(p) => (p.$dim ? "#aaa" : "#444")};
`;

const PropBlank = styled.div``;

const EditButton = styled.div`
  height: 15px;
  margin-left: -1px;
  text-align: center;
  background: #e4e4e4;
  border: 1px solid #c4c4c4;
  border-width: 1px 2px 2px 1px;
  line-height: 12px;
`;

const ValueInput = styled.div`
  height: 15px;
  margin-left: -1px;
  padding-left: 3px;
  background: #fff;
  border: 1px solid #333;
  line-height: 13px;
  color: #333;
`;

const ScrollTrack = styled.div<{ $w: number }>`
  width: ${(p) => p.$w}px;
  margin-left: 1px;
  flex: none;
  display: flex;
  flex-direction: column;
`;

const ScrollArrow = styled.div`
  height: 14px;
  flex: none;
  display: flex;
  align-items: center;
  justify-content: center;
`;

const ScrollThumb = styled.div<{ $top: number; $size: number }>`
  flex: none;
  margin-top: ${(p) => p.$top}px;
  height: ${(p) => p.$size}px;
  background: #cdcdcd;
`;

const ScrollFill = styled.div`
  flex: 1;
`;

const PropsFooter = styled.div`
  flex: 1;
  padding: 1px 3px 0 2px;
  display: flex;
  align-items: flex-start;
  justify-content: space-between;
`;

const HelpLink = styled.span`
  color: #1b74c5;
  text-decoration: underline;
  line-height: 14px;
`;

const ApplyButton = styled.div`
  width: 57px;
  height: 18px;
  background: #cccccc;
  color: #9a9a9a;
  display: flex;
  align-items: center;
  justify-content: center;
`;

const Browser = styled.div`
  flex: 1;
  min-height: 0;
  display: flex;
  flex-direction: column;
`;

const BrowserMain = styled.div`
  flex: 1;
  min-height: 0;
  display: flex;
  overflow: hidden;
`;

const Tree = styled.div`
  width: 167px;
  flex: none;
  background: #fff;
  overflow: hidden;
`;

const TreeRow = styled.div`
  height: 14.7px;
  display: flex;
  align-items: center;
`;

const LINE = "linear-gradient(#c8c8c8, #c8c8c8)";

const TreeCell = styled.div<{ $kind: string }>`
  flex: 0 0 17.3px;
  height: 100%;
  display: flex;
  align-items: center;
  justify-content: center;
  background-repeat: no-repeat;
  ${(p) => p.$kind === "|" && `background-image: ${LINE}; background-size: 1px 100%; background-position: center;`}
  ${(p) =>
    p.$kind === "T" &&
    `background-image: ${LINE}, ${LINE}; background-size: 1px 100%, 50% 1px; background-position: center, right center;`}
  ${(p) =>
    p.$kind === "L" &&
    `background-image: ${LINE}, ${LINE}; background-size: 1px 50%, 50% 1px; background-position: center top, right center;`}
  ${(p) => p.$kind === "+" && `background-image: ${LINE}; background-size: 50% 1px; background-position: right center;`}
`;

const Expander = styled.div`
  width: 9px;
  height: 9px;
  background: linear-gradient(#fff, #fff) center/5px 1px no-repeat, #c4c4c4;
  border: 1px solid #b0b0b0;
`;

const ViewsSlot = styled.div`
  flex: none;
  width: 14px;
  display: flex;
`;

const TreeLabel = styled.span<{ $sel?: boolean }>`
  margin-left: 5px;
  padding: 1px 1px 0;
  white-space: nowrap;
  line-height: 13px;
  color: #444;
  ${(p) =>
    p.$sel &&
    css`
      font-weight: 700;
      background: #e4e4e4;
      color: #222;
    `}
`;

const HScroll = styled.div`
  height: 13px;
  flex: none;
  padding: 0 17px 0 3px;
  display: flex;
  align-items: center;
  gap: 1px;
  svg {
    flex: none;
  }
`;

const HThumb = styled.div`
  width: 109px;
  height: 13px;
  margin: 0 31px 0 3px;
  background: #cdcdcd;
`;

const ViewColumn = styled.div`
  flex: 1;
  min-width: 0;
  display: flex;
  flex-direction: column;
`;

const ViewTabs = styled.div`
  height: 17px;
  flex: none;
  display: flex;
  background: #d0d0d0;
`;

const ViewTab = styled.div<{ $active?: boolean }>`
  width: ${(p) => (p.$active ? 107 : 106)}px;
  padding-left: ${(p) => (p.$active ? 5 : 4)}px;
  display: flex;
  align-items: center;
  gap: 6px;
  background: ${(p) => (p.$active ? "#fff" : "#c6c6c6")};
  color: ${(p) => (p.$active ? "#333" : "#666")};
  svg {
    flex: none;
  }
`;

const TabClose = styled.span`
  margin-left: auto;
  margin-right: 3px;
  display: flex;
`;

const TabMenu = styled.div`
  margin-left: auto;
  margin-right: 2px;
  display: flex;
  align-items: center;
`;

const CanvasRow = styled.div`
  flex: none;
  height: 520px;
  display: flex;
`;

const CanvasArea = styled.div`
  position: relative;
  width: 1080px;
  flex: none;
  background: #fff;
  overflow: hidden;
  svg {
    display: block;
  }
`;

const Cursor = styled.div`
  position: absolute;
  left: 139px;
  top: 174px;
`;

const NavBar = styled.div`
  position: absolute;
  left: 1057px;
  top: 2px;
  width: 23px;
  height: 76px;
  padding: 3px 0;
  display: flex;
  flex-direction: column;
  align-items: center;
  gap: 2px;
  background: #f0f0f0;
  border: 1px solid #c4c4c4;
  border-radius: 3px;
`;

const NavKnob = styled.div`
  width: 5px;
  height: 5px;
  border-radius: 50%;
  background: #bdbdbd;
  align-self: flex-end;
  margin-right: 2px;
`;

const NavSep = styled.div`
  width: 18px;
  height: 1px;
  background: #ccc;
`;

const MainScroll = styled.div`
  width: 15px;
  flex: none;
  display: flex;
  flex-direction: column;
  padding: 2px 0;
  background: #f4f4f4;
`;

const MainThumb = styled.div`
  margin-top: 239px;
  height: 13px;
  background: #cdcdcd;
`;

const ViewBar = styled.div`
  flex: 1;
  display: flex;
  align-items: center;
  background: #f0f0f0;
`;

const ScaleText = styled.div`
  width: 55px;
  padding-left: 9px;
  font-size: 9.5px;
  white-space: nowrap;
`;

const ViewTrack = styled.div`
  flex: 1;
  height: 100%;
  padding-left: 398px;
`;

const ViewThumb = styled.div`
  width: 14px;
  height: 100%;
  background: #cdcdcd;
`;

const StatusBar = styled.div`
  height: 23px;
  flex: none;
  padding-top: 2px;
  display: flex;
  align-items: center;
  background: #c9c9c9;
  border-top: 1px solid #dadada;
  border-bottom: 2px solid #dde3ea;
`;

const StatusText = styled.div`
  width: 340px;
  padding-left: 2px;
  font-size: 9.7px;
  white-space: nowrap;
  color: #333;
`;

const Combo = styled.div<{ $ml: number; $w: number }>`
  width: ${(p) => p.$w}px;
  height: 15px;
  margin-left: ${(p) => p.$ml}px;
  padding: 0 3px 0 2px;
  flex: none;
  display: flex;
  align-items: center;
  justify-content: flex-end;
  background: #fbfbfb;
`;

const ComboText = styled.span`
  margin-right: auto;
  color: #666;
`;

const StatusCount = styled.span`
  width: 11px;
  color: #333;
`;

const Watermark = styled.div`
  position: absolute;
  left: 1107px;
  top: 681px;
  height: 21px;
  display: flex;
  align-items: center;
  gap: 4px;
  font: 500 18px Roboto, sans-serif;
  color: #fff;
  text-shadow: 1px 0 0 #9c9c9c, -1px 0 0 #9c9c9c, 0 1px 0 #9c9c9c, 0 -1px 0 #9c9c9c, 1px 1px 0 #9c9c9c, -1px -1px 0 #9c9c9c,
    1px -1px 0 #9c9c9c, -1px 1px 0 #9c9c9c;
`;

const InBox = styled.span`
  padding: 0 2px;
  border: 2px solid #a4a4a4;
  border-radius: 3px;
  line-height: 17px;
  background: rgba(255, 255, 255, 0.55);
`;
